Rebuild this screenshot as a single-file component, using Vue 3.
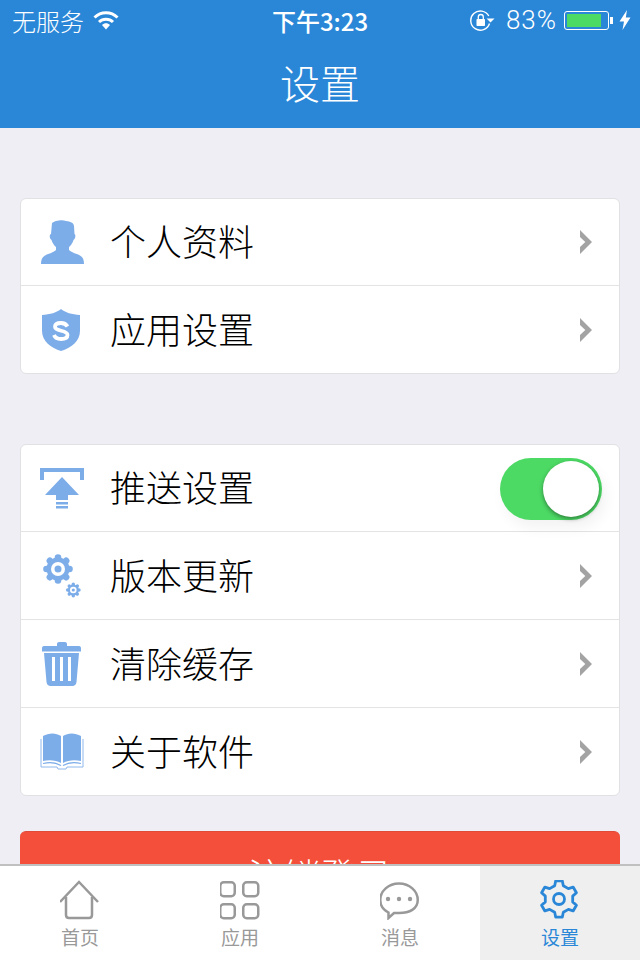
<script setup>
const firstGroup = [
  { key: 'user', label: '个人资料' },
  { key: 'shield', label: '应用设置' }
]
const secondGroup = [
  { key: 'push', label: '推送设置', toggle: true },
  { key: 'gears', label: '版本更新' },
  { key: 'trash', label: '清除缓存' },
  { key: 'book', label: '关于软件' }
]
const groups = [firstGroup, secondGroup]

const tabs = [
  { key: 'home', label: '首页' },
  { key: 'apps', label: '应用' },
  { key: 'msg', label: '消息' },
  { key: 'gear', label: '设置', active: true }
]

// outline of a gear with rounded-off teeth, used by the active tab
function gearPath(cx, cy, teeth, outer, inner) {
  const step = (Math.PI * 2) / teeth
  const pts = []
  for (let i = 0; i < teeth; i++) {
    const a = -Math.PI / 2 + i * step
    const spread = step * 0.17
    const root = step * 0.3
    pts.push([a - root, inner], [a - spread, outer], [a + spread, outer], [a + root, inner])
  }
  return pts
    .map(([a, r], i) => `${i ? 'L' : 'M'}${(cx + r * Math.cos(a)).toFixed(2)} ${(cy + r * Math.sin(a)).toFixed(2)}`)
    .join(' ') + ' Z'
}
const tabGear = gearPath(19, 19, 6, 18.5, 14)
const bigTeeth = [0, 45, 90, 135, 180, 225, 270, 315]
</script>

<template>
  <div class="page">
    <header class="top">
      <div class="status">
        <div class="status-left">
          <span>无服务</span>
          <svg class="wifi" width="26" height="20" viewBox="0 0 26 20">
            <path d="M1.5 7.5 C8 1.2 18 1.2 24.5 7.5" fill="none" stroke="#fff" stroke-width="3" />
            <path d="M6 12 C10 8.3 16 8.3 20 12" fill="none" stroke="#fff" stroke-width="3" />
            <path d="M9 15 C11.5 12.8 14.5 12.8 17 15 L13 19.5 Z" fill="#fff" />
          </svg>
        </div>
        <div class="status-time">下午3:23</div>
        <div class="status-right">
          <svg width="26" height="22" viewBox="0 0 26 22">
            <path d="M19.5 14.5 A9.6 9.6 0 1 1 18.8 7" fill="none" stroke="#fff" stroke-width="1.4" />
            <path d="M16.6 9.5 H24.5 L20.5 13.5 Z" fill="#fff" />
            <rect x="6.5" y="10" width="8.5" height="7" rx="0.8" fill="#fff" />
            <path d="M8.3 10 V8 a2.5 2.5 0 0 1 5 0 V10" fill="none" stroke="#fff" stroke-width="1.3" />
          </svg>
          <span class="percent">83%</span>
          <div class="battery"><div class="battery-fill" /></div>
          <div class="battery-nub" />
          <svg class="bolt" width="12" height="20" viewBox="0 0 12 20">
            <path d="M8 0 L0.5 11.5 H5 L3.5 20 L11.5 7.5 H6.8 Z" fill="#fff" />
          </svg>
        </div>
      </div>
      <h1 class="title">设置</h1>
    </header>

    <main class="content">
      <section v-for="(group, g) in groups" :key="g" class="card">
        <div v-for="item in group" :key="item.key" class="row">
          <svg class="row-icon" width="44" height="44" viewBox="0 0 44 44">
            <g v-if="item.key === 'user'" fill="#7dade9">
              <path d="M12 3 C15 0.8 17 1.200 19 0.600 C22 -0.200 24 0.400 26 1 C30.500 1.500 33.500 2.500 34 6 L34.500 14 C36 14.500 35.500 19 33.500 20 C32.500 23 31 25.500 29 27 V30 C32 33 37 33.500 40 35.500 C43 37 44 40 44 44 H1 C1 40 2 37 5 35.500 C8 33.500 13 33 16 30 V27 C14 25.500 12.500 23 11.500 20 C9.500 19 9 14.500 11 14 Z" />
            </g>
            <g v-else-if="item.key === 'shield'">
              <path d="M21 1 C25 4.500 32 6.500 40 7 V23 C40 33 31 40 21 43 C11 40 2 33 2 23 V7 C10 6.500 17 4.500 21 1 Z" fill="#7dade9" />
              <path d="M27.500 18.500 C26 16 24 15 21 15 C17.500 15 15 16.300 15 18.800 C15 24 27.500 21.500 27.500 27 C27.500 29.500 25 31 21 31 C17.500 31 15 29.500 14 27" fill="none" stroke="#fff" stroke-width="3.800" />
            </g>
            <g v-else-if="item.key === 'push'" fill="#7dade9">
              <path d="M0 2 H44 V14 H40 V6 H4 V14 H0 Z" />
              <path d="M22 11 L39 29 H28 V34 H16 V29 H5 Z" />
              <rect x="16" y="36" width="12" height="2.500" />
              <rect x="16" y="40" width="12" height="2.500" />
            </g>
            <g v-else-if="item.key === 'gears'">
              <g fill="#7dade9">
                <circle cx="18" cy="15" r="11.500" />
                <circle v-for="t in bigTeeth" :key="t" cx="18" cy="3.500" r="3.300" :transform="`rotate(${t} 18 15)`" />
              </g>
              <circle cx="18" cy="15" r="7" fill="#fff" />
              <circle cx="18" cy="15" r="3.500" fill="#7dade9" />
              <g fill="#7dade9">
                <circle cx="33.300" cy="36" r="5.500" />
                <circle v-for="t in bigTeeth" :key="'s' + t" cx="33.300" cy="30.300" r="1.700" :transform="`rotate(${t} 33.300 36)`" />
              </g>
              <circle cx="33.300" cy="36" r="3.300" fill="#fff" />
              <circle cx="33.300" cy="36" r="1.600" fill="#7dade9" />
            </g>
            <g v-else-if="item.key === 'trash'">
              <path d="M17 4 V2 C17 0.800 18 0 19 0 H25 C26 0 27 0.800 27 2 V4 H39 C40.500 4 41 5 41 6.500 V9.500 H2 V6.500 C2 5 2.500 4 4 4 Z" fill="#7dade9" />
              <path d="M4 11 H39 L36.500 40 C36.300 42.500 34.500 44 32.500 44 H10.500 C8.500 44 6.700 42.500 6.500 40 Z" fill="#7dade9" />
              <rect x="12" y="15" width="3" height="24" fill="#fff" />
              <rect x="20" y="15" width="3" height="24" fill="#fff" />
              <rect x="28" y="15" width="3" height="24" fill="#fff" />
            </g>
            <g v-else-if="item.key === 'book'">
              <path d="M3 6 C9 2.500 16 2.500 21 6 V33 C16 30 9 29.500 3 31 Z" fill="#7dade9" />
              <path d="M23 6 C28 2.500 35 2.500 41 6 V31 C35 29.500 28 30 23 33 Z" fill="#7dade9" />
              <path d="M1 9 V37 H17 L18 39 H26 L27 37 H43 V9" fill="none" stroke="#8fb8ec" stroke-width="1" />
              <path d="M3 33.500 C9 32 16 32.500 21 35.500 M41 33.500 C35 32 28 32.500 23 35.500" fill="none" stroke="#7dade9" stroke-width="1.200" />
            </g>
          </svg>
          <span class="row-label">{{ item.label }}</span>
          <div v-if="item.toggle" class="toggle"><div class="knob" /></div>
          <svg v-else class="chevron" width="12" height="24" viewBox="0 0 12 24">
            <path d="M0 0 L12 12 L0 24 V17 L5.300 12 L0 7 Z" fill="#a3a3a3" />
          </svg>
        </div>
      </section>
      <button class="logout">注销登录</button>
    </main>

    <nav class="tabbar">
      <div v-for="tab in tabs" :key="tab.key" class="tab" :class="{ active: tab.active }">
        <svg width="40" height="40" viewBox="0 0 40 40" fill="none" stroke="currentColor" stroke-width="2.500">
          <g v-if="tab.key === 'home'">
            <path d="M0 22 L19 2 L38 22" />
            <path d="M6 17 V35 C6 37 7 38 9 38 H29 C31 38 32 37 32 35 V17" />
          </g>
          <g v-else-if="tab.key === 'apps'">
            <rect x="0.250" y="2.250" width="14.500" height="14" rx="3.500" />
            <rect x="23.250" y="2.250" width="15" height="14" rx="3.500" />
            <rect x="0.250" y="24.250" width="14.500" height="14" rx="3.500" />
            <rect x="23.250" y="24.250" width="15" height="14" rx="3.500" />
          </g>
          <g v-else-if="tab.key === 'msg'">
            <path d="M8.500 32.500 C3.500 30 0.250 25.500 0.250 20 C0.250 11 8.500 3.500 19 3.500 C29.500 3.500 37.750 11 37.750 20 C37.750 29 29.500 33 19 33 C17 33 15.500 33 14 33 L8.500 38 Z" />
            <g fill="currentColor" stroke="none">
              <circle cx="8" cy="19" r="2.200" />
              <circle cx="19" cy="19" r="2.200" />
              <circle cx="30" cy="19" r="2.200" />
            </g>
          </g>
          <g v-else>
            <path :d="tabGear" stroke-width="2.800" stroke-linejoin="round" />
            <circle cx="19" cy="19" r="5.500" stroke-width="2.800" />
          </g>
        </svg>
        <span class="tab-label">{{ tab.label }}</span>
      </div>
    </nav>
  </div>
</template>

<style scoped>
.page {
  width: 640px;
  height: 960px;
  display: flex;
  flex-direction: column;
  overflow: hidden;
  background: #eeeef4;
  font-family: "Noto Sans CJK SC", "Liberation Sans", sans-serif;
}
.top {
  height: 128px;
  flex-shrink: 0;
  background: #2a87d8;
  color: #fff;
}
.status {
  height: 40px;
  display: grid;
  grid-template-columns: 1fr auto 1fr;
  align-items: center;
  padding: 0 9px 0 12px;
  font-size: 24px;
}
.status-left {
  display: flex;
  align-items: center;
  gap: 9px;
  font-weight: 300;
}
.wifi {
  margin-top: -1px;
}
.status-time {
  font-weight: 500;
  font-size: 24px;
  margin-left: -3px;
}
.status-right {
  display: flex;
  align-items: center;
  justify-content: flex-end;
}
.percent {
  font-family: Roboto, "Liberation Sans", sans-serif;
  font-size: 26px;
  font-weight: 300;
  margin-left: 10px;
  letter-spacing: 1px;
}
.battery {
  width: 45px;
  height: 19px;
  box-sizing: border-box;
  margin-left: 7px;
  padding: 2px;
  border: 1px solid #fff;
  border-radius: 3px;
}
.battery-fill {
  width: 34px;
  height: 100%;
  background: #4cd964;
}
.battery-nub {
  width: 3px;
  height: 7px;
  margin-left: 1px;
  background: #fff;
}
.bolt {
  margin-left: 6px;
}
.title {
  margin: 0;
  height: 88px;
  line-height: 84px;
  text-align: center;
  font-size: 40px;
  font-weight: 300;
}
.content {
  flex: 1;
  min-height: 0;
  padding: 70px 20px 0;
  display: flex;
  flex-direction: column;
  overflow: hidden;
}
.card {
  flex-shrink: 0;
  background: #fff;
  border: 1px solid #e1e1e4;
  border-radius: 6px;
  margin-bottom: 70px;
}
.card:nth-of-type(2) {
  margin-bottom: 35px;
}
.row {
  height: 86px;
  display: flex;
  align-items: center;
  padding: 0 27px 0 19px;
}
.row + .row {
  height: 87px;
  border-top: 1px solid #e3e3e6;
}
.row-icon {
  flex-shrink: 0;
  margin-right: 26px;
}
.row-label {
  flex: 1;
  margin-bottom: 4px;
  font-size: 36px;
  color: #000;
  font-weight: 300;
}
.toggle {
  width: 102px;
  height: 62px;
  box-sizing: border-box;
  margin: 2px -10px 0 0;
  padding: 3px;
  display: flex;
  justify-content: flex-end;
  background: #4cd964;
  border-radius: 31px;
  box-shadow: 4px 8px 14px rgba(0, 0, 0, 0.05);
}
.knob {
  width: 56px;
  height: 56px;
  background: #fff;
  border-radius: 50%;
  box-shadow: 0 2px 4px rgba(0, 0, 0, 0.4);
}
.logout {
  flex-shrink: 0;
  height: 88px;
  padding: 0 0 4px;
  border: 0;
  border-top: 1px solid #e04a38;
  border-radius: 6px;
  background: #f44f3b;
  color: #fff;
  font-family: inherit;
  font-size: 36px;
  font-weight: 300;
}
.tabbar {
  height: 96px;
  flex-shrink: 0;
  box-sizing: border-box;
  border-top: 2px solid #c0c0c0;
  background: #fff;
  display: grid;
  grid-template-columns: repeat(4, 1fr);
  position: relative;
}
.tab {
  display: flex;
  flex-direction: column;
  align-items: center;
  padding-top: 14px;
  color: #999;
}
.tab.active {
  background: #efefef;
  color: #2a87d8;
}
.tab-label {
  font-size: 19px;
  line-height: 22px;
  margin-top: 6px;
}
</style>
